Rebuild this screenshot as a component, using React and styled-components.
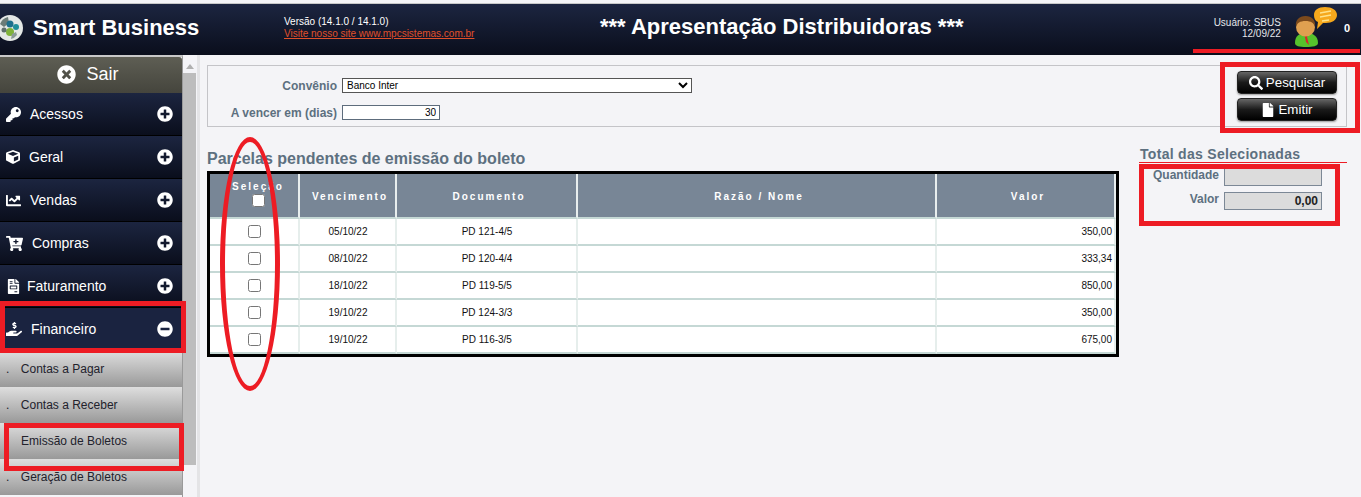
import styled, { createGlobalStyle } from 'styled-components';
import {
  FaKey, FaCube, FaChartLine, FaCartPlus, FaFileInvoice, FaHandHoldingUsd,
  FaTimesCircle, FaPlusCircle, FaMinusCircle, FaSearch, FaFile,
} from 'react-icons/fa';

const GlobalStyle = createGlobalStyle`
  html, body { margin: 0; height: 100%; overflow: hidden; background: #f4f4f7; }
  body { font-family: "Liberation Sans", Arial, sans-serif; }
  * { box-sizing: border-box; }
`

const Page = styled.div`
  position: relative;
  width: 1361px;
  height: 497px;
  overflow: hidden;
  padding-top: 3px;
  background: #f4f4f7;
`
const Header = styled.header`
  display: grid;
  grid-template-columns: 284px 316px auto 1fr;
  align-items: center;
  height: 52px;
  border-top: 1px solid #c8c8c8;
  background: linear-gradient(#1c2540, #0a0e1c);
  color: #fff;
`
const Brand = styled.div`
  display: flex;
  align-items: center;
  gap: 10px;
  margin: -4px 0 0 -3px;
  font-size: 22px;
  font-weight: bold;
`
const Version = styled.div`
  font-size: 10px;
  line-height: 12px;
  margin-top: -3px;
`
const SiteLink = styled.a`
  display: block;
  color: #e0502a;
  text-decoration: underline;
`
const PageTitle = styled.h1`
  margin: -5px 0 0;
  font-size: 22px;
  font-weight: bold;
`
const UserArea = styled.div`
  display: flex;
  justify-content: flex-end;
  align-items: center;
  padding-right: 11px;
`
const UserInfo = styled.div`
  font-size: 10px;
  line-height: 11px;
  text-align: right;
  margin-top: -3px;
  color: #e4e6ea;
`
const AvatarSlot = styled.div`
  display: flex;
  margin: -5px 0 0 14px;
`
const Count = styled.span`
  margin: -3px 0 0 7px;
  font-size: 11px;
  font-weight: bold;
`
const Body = styled.div`
  display: flex;
  height: 442px;
`
const Side = styled.aside`
  display: flex;
  flex: none;
  width: 200px;
  border-right: 3px solid #e4e4e6;
`
const Menu = styled.nav`
  width: 183px;
  flex: none;
  border-right: 1px solid #9a9a9a;
  border-top: 2px solid #c8c8c8;
`
const Logout = styled.div`
  display: flex;
  align-items: center;
  justify-content: center;
  gap: 10px;
  height: 36px;
  padding: 0 6px 1px 0;
  border-radius: 0 3px 0 0;
  background: linear-gradient(#5e5e54, #45453d);
  color: #fff;
  font-size: 18px;
`
const MenuItem = styled.div`
  display: flex;
  align-items: center;
  height: 43px;
  padding: 0 9px 0 6px;
  border-bottom: 1px solid #000;
  background: ${p => (p.$open ? '#1a2340' : 'linear-gradient(#1c2540, #0a0e1c)')};
  color: #fff;
  font-size: 14px;
`
const MenuLabel = styled.span`
  flex: 1;
  margin-left: ${p => p.$indent}px;
`
const SubItem = styled.div`
  display: flex;
  align-items: center;
  height: 36px;
  padding-left: 6px;
  background: linear-gradient(#dedede, #999);
  color: #22222c;
  font-size: 12px;
`
const SubText = styled.span`
  margin-left: ${p => (p.$dot ? 11.5 : 15)}px;
`
const Scroll = styled.div`
  display: flex;
  flex-direction: column;
  align-items: center;
  width: 13px;
  margin-top: 2px;
`
const ScrollArrow = styled.div`
  margin: 7px 0 4px;
  border: 4px solid transparent;
  border-top: 0;
  border-bottom: 5px solid #b0b0b0;
`
const ScrollThumb = styled.div`
  width: 13px;
  height: 392px;
  background: #bdbdbd;
`
const Main = styled.main`
  flex: 1;
  padding: 10px 14px 0 7px;
`
const FilterBox = styled.section`
  display: flex;
  justify-content: space-between;
  align-items: center;
  height: 62px;
  padding-right: 9px;
  border: 1px solid #c4c4c8;
`
const FilterFields = styled.div`
  display: grid;
  grid-template-columns: 129px auto;
  column-gap: 5px;
  row-gap: 12px;
  align-items: center;
  align-self: flex-start;
  margin-top: 12px;
`
const FieldLabel = styled.label`
  font-size: 12px;
  font-weight: bold;
  text-align: right;
  color: #5d7080;
`
const Select = styled.select`
  width: 350px;
  height: 15px;
  padding: 0;
  border: 1px solid #555;
  border-radius: 0;
  background: #fff;
  font: 10px "Liberation Sans", Arial, sans-serif;
`
const DaysInput = styled.input`
  width: 98px;
  height: 15px;
  padding: 0 3px;
  border: 1px solid #5d6c7c;
  background: #fff;
  text-align: right;
  font: 10px "Liberation Sans", Arial, sans-serif;
`
const Actions = styled.div`
  display: flex;
  flex-direction: column;
  gap: 4px;
`
const ActionButton = styled.button`
  display: flex;
  align-items: center;
  justify-content: center;
  gap: 3px;
  width: 100px;
  height: 23px;
  padding: 0;
  border: 1px solid #222;
  border-radius: 4px;
  background: linear-gradient(#666, #1a1a1a 50%, #000);
  box-shadow: 0 1px 2px #999;
  color: #fff;
  font: 13.33px "Liberation Sans", Arial, sans-serif;
`
const Content = styled.div`
  display: flex;
  gap: 21px;
  margin-top: 20px;
`
const Listing = styled.section`
  width: 912px;
  flex: none;
  padding-top: 2px;
`
const SectionTitle = styled.h2`
  margin: 0 0 2px;
  font-size: 16px;
  line-height: 20px;
  font-weight: bold;
  color: #5d7080;
`
const Table = styled.table`
  width: 912px;
  border: 3px solid #000;
  border-spacing: 0;
  table-layout: fixed;
  background: #fff;
`
const Th = styled.th`
  width: ${p => p.$w}px;
  height: 45px;
  padding: 1px 0 0 5px;
  border-right: 2px solid #e8eeee;
  border-bottom: 2px solid #c5d8d5;
  background: #788696;
  color: #fff;
  font-size: 10px;
  font-weight: bold;
  letter-spacing: 2px;
  text-align: center;
`
const SelectHead = styled.div`
  display: flex;
  flex-direction: column;
  align-items: center;
  gap: 2px;
  margin: -5px 0 0 3px;
`
const Td = styled.td`
  height: 27px;
  padding: 0 ${p => (p.$right ? '2px' : '0')} 0 1px;
  border-right: 2px solid #e6eeec;
  border-bottom: 2px solid #c5d8d5;
  color: #111;
  font-size: 10px;
  text-align: ${p => (p.$right ? 'right' : 'center')};
`
const Check = styled.input`
  display: block;
  margin: 0 auto;
`
const Totals = styled.aside`
  width: 200px;
`
const TotalsTitle = styled.h3`
  margin: 0 0 6px;
  font-size: 14px;
  line-height: 15px;
  font-weight: bold;
  letter-spacing: 0.3px;
  color: #5d7080;
`
const TotalsGrid = styled.div`
  display: grid;
  grid-template-columns: 79px 98px;
  column-gap: 5px;
  row-gap: 6px;
  align-items: center;
`
const TotalsLabel = styled.span`
  margin-top: -4px;
  font-size: 12px;
  font-weight: bold;
  text-align: right;
  color: #5d7080;
`
const TotalsValue = styled.div`
  height: 18px;
  padding-right: 3px;
  border: 1px solid #7c8896;
  background: #dcdcdc;
  font-size: 12px;
  font-weight: bold;
  line-height: 16px;
  text-align: right;
  color: #222;
`
const Mark = styled.div`
  position: absolute;
  border: 5px solid #ed1c24;
`
const MarkUser = styled(Mark)`
  left: 1193px; top: 49px; width: 167px; height: 4px; border-width: 2px;
`
const MarkActions = styled(Mark)`
  left: 1220px; top: 62px; width: 140px; height: 71px;
`
const MarkTitleLine = styled(Mark)`
  left: 1139px; top: 162px; width: 208px; height: 1px; border-width: 1px 0 0;
`
const MarkTotals = styled(Mark)`
  left: 1139px; top: 164px; width: 201px; height: 62px;
`
const MarkMenu = styled(Mark)`
  left: 0; top: 301px; width: 186px; height: 52px;
`
const MarkSub = styled(Mark)`
  left: 4px; top: 423px; width: 180px; height: 48px;
`
const MarkColumn = styled(Mark)`
  left: 220px; top: 137px; width: 60px; height: 254px; border-radius: 50%;
`

const menu = [
  { label: 'Acessos', icon: FaKey, size: 15, indent: 9 },
  { label: 'Geral', icon: FaCube, size: 14, indent: 9 },
  { label: 'Vendas', icon: FaChartLine, size: 15, indent: 9 },
  { label: 'Compras', icon: FaCartPlus, size: 17, indent: 9 },
  { label: 'Faturamento', icon: FaFileInvoice, size: 15, indent: 6 },
]
const submenu = [
  { label: 'Contas a Pagar', dot: true },
  { label: 'Contas a Receber', dot: true },
  { label: 'Emissão de Boletos', dot: false },
  { label: 'Geração de Boletos', dot: true },
]
const rows = [
  ['05/10/22', 'PD 121-4/5', '350,00'],
  ['08/10/22', 'PD 120-4/4', '333,34'],
  ['18/10/22', 'PD 119-5/5', '850,00'],
  ['19/10/22', 'PD 124-3/3', '350,00'],
  ['19/10/22', 'PD 116-3/5', '675,00'],
]

const Logo = () => (
  <svg width="26" height="26" viewBox="0 0 26 26">
    <circle cx="13" cy="13" r="13" fill="#e4e8e6" />
    <path d="M3 9a11 11 0 0 1 8-7l1 6-5 4z" fill="#6b7c78" />
    <circle cx="13" cy="9" r="3.5" fill="#1d6f8c" />
    <circle cx="19" cy="12" r="3" fill="#1f8f9a" />
    <circle cx="13" cy="17" r="4" fill="#7fb23a" />
    <circle cx="7" cy="15" r="2.5" fill="#5f6f6c" />
    <path d="M20 20a11 11 0 0 1-6 4l1-5 4-2z" fill="#8a9a96" />
  </svg>
)

const UserIcon = () => (
  <svg width="42" height="40" viewBox="0 0 42 40">
    <path d="M0 36c0-7 4-10 11-10s12 3 12 10c0 3-5 4-12 4S0 39 0 36z" fill="#56c22c" />
    <path d="M9 28h4l-1 2 2 8-3-3-1-5z" fill="#d8262c" />
    <ellipse cx="10.500" cy="20" rx="9.500" ry="9.500" fill="#e0a050" />
    <path d="M1 20C0 13 4 9 10.500 9S21 13 20 20c-1-4-4-6-9.500-6S2 16 1 20z" fill="#7c4a1c" />
    <path d="M19 8c0-5 4-8 11-8s12 3 12 8-5 8-11 8c-1 0-2 0-3 0l-6 6 1-7c-3-1-4-4-4-7z" fill="#f6a81c" />
    <path d="M25 6l11-2M25 10l11-2M27 14l7-1" stroke="#ffe28a" strokeWidth="1.3" />
  </svg>
)

const App = () => {
  return (
    <Page>
      <GlobalStyle />
      <Header>
        <Brand><Logo />Smart Business</Brand>
        <Version>
          Versão (14.1.0 / 14.1.0)
          <SiteLink>Visite nosso site www.mpcsistemas.com.br</SiteLink>
        </Version>
        <PageTitle>*** Apresentação Distribuidoras ***</PageTitle>
        <UserArea>
          <UserInfo>Usuário: SBUS<br />12/09/22</UserInfo>
          <AvatarSlot><UserIcon /></AvatarSlot>
          <Count>0</Count>
        </UserArea>
      </Header>
      <Body>
        <Side>
          <Menu>
            <Logout><FaTimesCircle size={19} />Sair</Logout>
            {menu.map(({ label, icon: Icon, size, indent }) => (
              <MenuItem key={label}>
                <Icon size={size} />
                <MenuLabel $indent={indent}>{label}</MenuLabel>
                <FaPlusCircle size={16} />
              </MenuItem>
            ))}
            <MenuItem $open>
              <FaHandHoldingUsd size={16} />
              <MenuLabel $indent={9}>Financeiro</MenuLabel>
              <FaMinusCircle size={16} />
            </MenuItem>
            {submenu.map(({ label, dot }) => (
              <SubItem key={label}>
                {dot && '.'}
                <SubText $dot={dot}>{label}</SubText>
              </SubItem>
            ))}
          </Menu>
          <Scroll>
            <ScrollArrow />
            <ScrollThumb />
          </Scroll>
        </Side>
        <Main>
          <FilterBox>
            <FilterFields>
              <FieldLabel>Convênio</FieldLabel>
              <Select defaultValue="inter">
                <option value="inter">Banco Inter</option>
              </Select>
              <FieldLabel>A vencer em (dias)</FieldLabel>
              <DaysInput defaultValue="30" />
            </FilterFields>
            <Actions>
              <ActionButton><FaSearch size={14} />Pesquisar</ActionButton>
              <ActionButton><FaFile size={14} />Emitir</ActionButton>
            </Actions>
          </FilterBox>
          <Content>
            <Listing>
              <SectionTitle>Parcelas pendentes de emissão do boleto</SectionTitle>
              <Table>
                <thead>
                  <tr>
                    <Th $w={90}>
                      <SelectHead>Seleção<Check type="checkbox" /></SelectHead>
                    </Th>
                    <Th $w={97}>Vencimento</Th>
                    <Th $w={181}>Documento</Th>
                    <Th $w={359}>Razão / Nome</Th>
                    <Th $w={179}>Valor</Th>
                  </tr>
                </thead>
                <tbody>
                  {rows.map(([date, doc, value]) => (
                    <tr key={doc}>
                      <Td><Check type="checkbox" /></Td>
                      <Td>{date}</Td>
                      <Td>{doc}</Td>
                      <Td />
                      <Td $right>{value}</Td>
                    </tr>
                  ))}
                </tbody>
              </Table>
            </Listing>
            <Totals>
              <TotalsTitle>Total das Selecionadas</TotalsTitle>
              <TotalsGrid>
                <TotalsLabel>Quantidade</TotalsLabel>
                <TotalsValue />
                <TotalsLabel>Valor</TotalsLabel>
                <TotalsValue>0,00</TotalsValue>
              </TotalsGrid>
            </Totals>
          </Content>
        </Main>
      </Body>
      <MarkUser />
      <MarkActions />
      <MarkTitleLine />
      <MarkTotals />
      <MarkMenu />
      <MarkSub />
      <MarkColumn />
    </Page>
  )
}

export default App;
